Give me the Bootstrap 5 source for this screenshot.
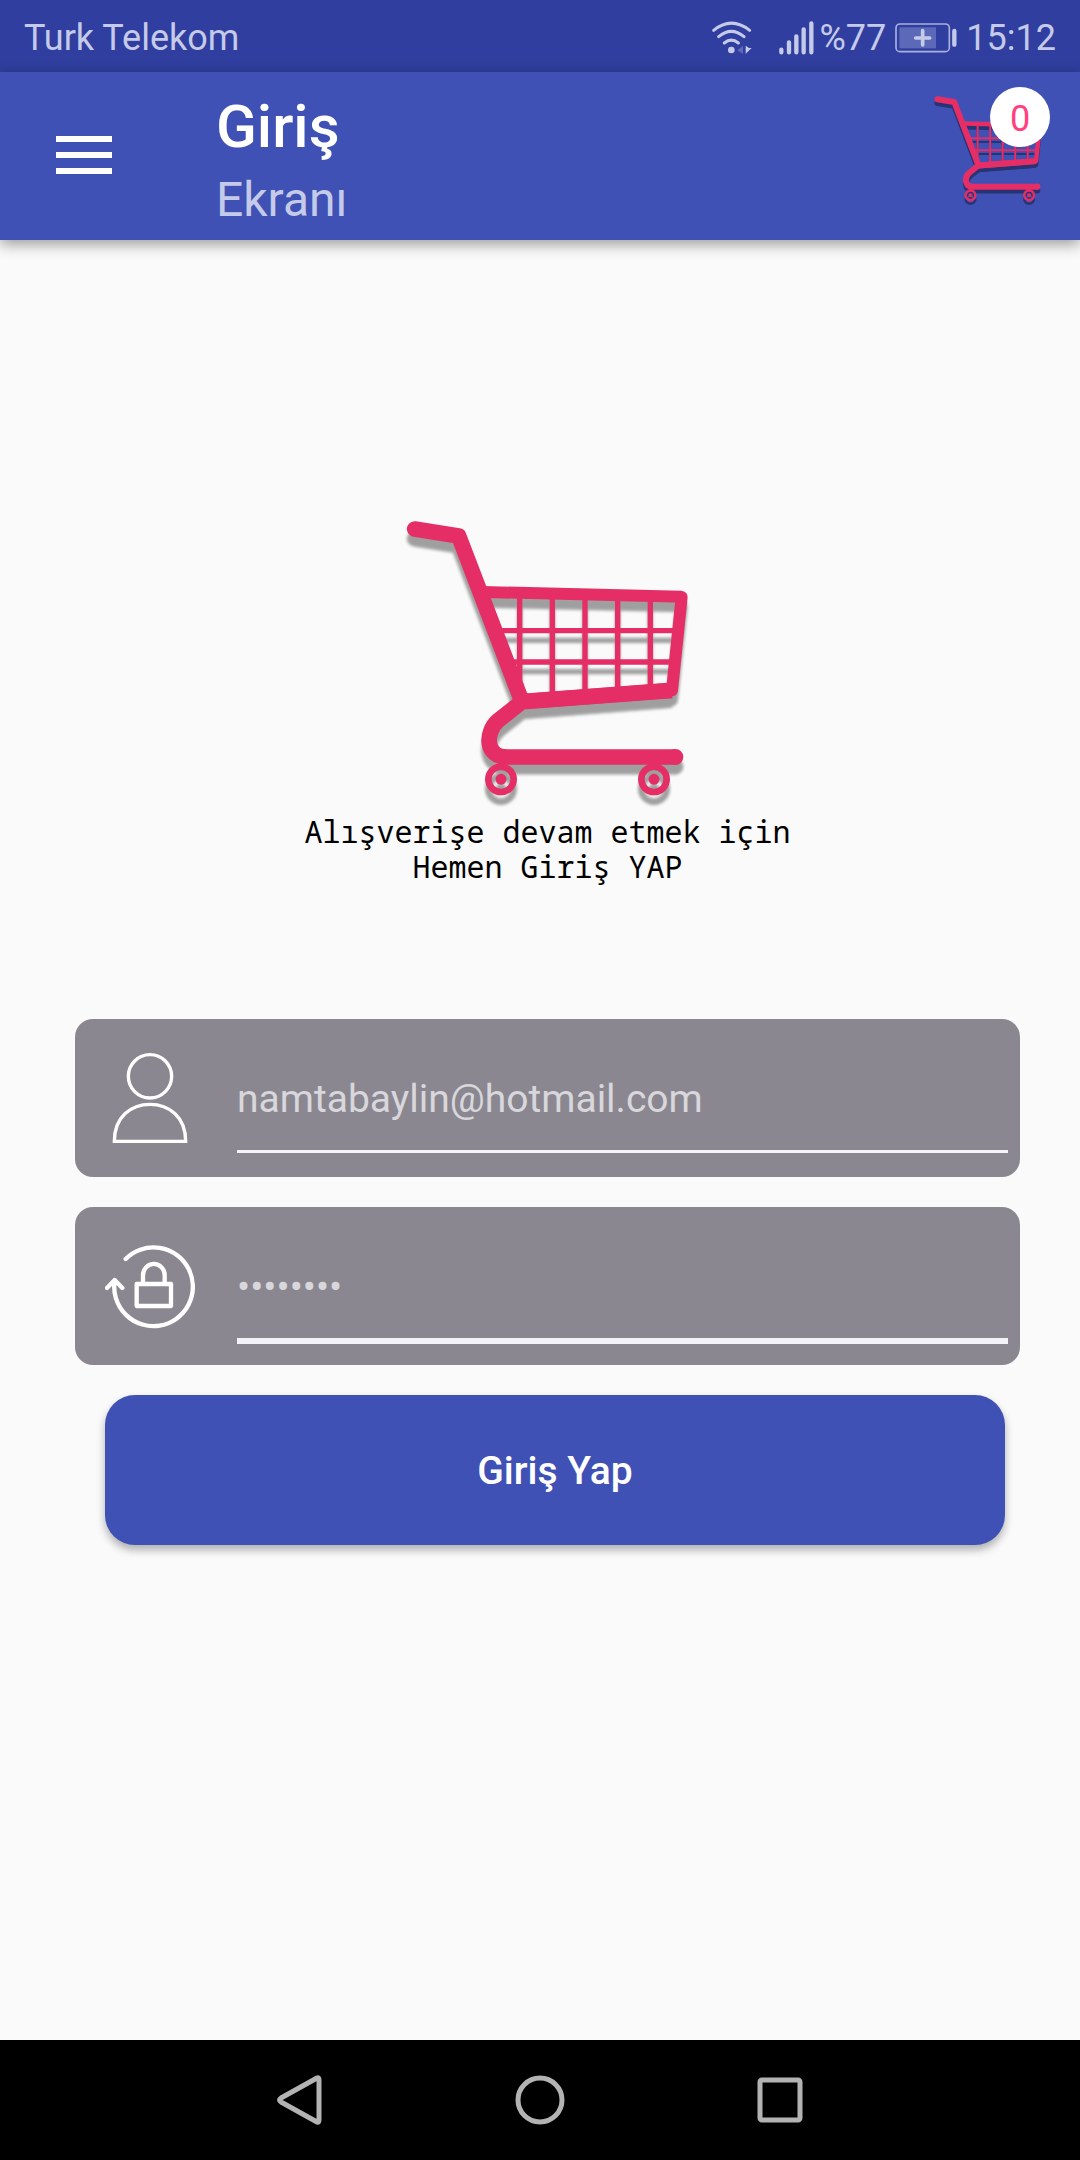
<!DOCTYPE html>
<html lang="tr">
<head>
<meta charset="utf-8">
<meta name="viewport" content="width=device-width, initial-scale=1">
<title>Giriş Ekranı</title>
<link href="https://cdn.jsdelivr.net/npm/bootstrap@5.3.0/dist/css/bootstrap.min.css" rel="stylesheet">
<style>
  body { background: #fafafa; font-family: Roboto, "Noto Sans", sans-serif; }
  svg { display: block; flex: none; }
  .statusbar { background: #303f9f; color: #c5cae9; font-size: 36px; line-height: 42px; height: 72px; padding: 4px 24px 0; }
  .statusbar .signal { margin-left: 27px; margin-right: 6px; }
  .statusbar .battery { margin-left: 9px; margin-right: 9px; }
  .appbar { background: #3f51b5; height: 168px; padding: 0 34px 0 56px; box-shadow: 0 4px 14px rgba(0,0,0,.4); }
  .plain { background: none; border: 0; padding: 0; }
  .menu-btn { margin-top: 64px; }
  .titles { margin-left: 104px; padding-top: 20px; }
  .titles h1 { font-size: 60px; line-height: 70px; font-weight: 500; }
  .titles p { font-size: 48px; line-height: 76px; color: #c5cae9; }
  .cart-btn { margin-top: 20px; }
  .count { top: -5px; right: -4px; width: 60px; height: 60px; padding-top: 3px; color: #ff4081; font-size: 36px; line-height: 42px; }
  .login { padding: 270px 60px 60px 75px; }
  .prompt { font: 30px/35px "Noto Sans Mono", "DejaVu Sans Mono", monospace; color: #000; margin: 4px 0 135px; }
  .fields { gap: 30px; }
  .field-box { background: #8b8791; border-radius: 18px; height: 158px; padding: 0 12px 0 30px; gap: 42px; }
  .field-box input { color: #d8d7dc; font-size: 39px; line-height: 46px; height: 134px; padding: 28px 0 0; background: transparent; border: 0; border-bottom: 3px solid #f4f3f7; border-radius: 0; outline: 0; min-width: 0; }
  .field-box input.active-line { height: 137px; border-bottom-width: 6px; }
  .submit { background: #3f51b5; color: #fff; border: 0; border-radius: 30px; height: 150px; margin: 0 15px 0 30px; padding: 3px 0 0; font-size: 39px; font-weight: 500; box-shadow: 0 5px 8px rgba(0,0,0,.3); }
  .submit:hover { background: #3949ab; color: #fff; }
  .navkeys { background: #000; height: 120px; }
  .navkeys button { width: 240px; }
</style>
<script src="https://cdn.jsdelivr.net/npm/bootstrap@5.3.0/dist/js/bootstrap.bundle.min.js"></script>
</head>
<body class="min-vh-100 d-flex flex-column">

<svg width="0" height="0" class="position-absolute" aria-hidden="true">
  <defs>
    <g id="cart-lines" fill="none">
      <path d="M74 87L206 108L396 605" stroke-width="47" stroke-linecap="round" stroke-linejoin="round"/>
      <path d="M280 276L875 290" stroke-width="36"/>
      <path d="M875 291L846 571" stroke-width="36" stroke-linecap="round"/>
      <path d="M396 605L845 571" stroke-width="46"/>
      <path d="M845 571L396 605L324 662C284 698 286 771 350 771H856" stroke-width="47" stroke-linejoin="round"/>
      <path d="M389 280V560M487 285V590M585 285V580M683 285V575M781 285V565M330 392H860M370 486H850" stroke-width="16"/>
      <circle cx="856" cy="771" r="12" stroke-width="24"/>
      <circle cx="333" cy="838" r="38" stroke-width="20"/>
      <circle cx="792" cy="838" r="38" stroke-width="20"/>
      <circle cx="333" cy="838" r="8" stroke-width="17"/>
      <circle cx="792" cy="838" r="8" stroke-width="17"/>
    </g>
    <filter id="soft" x="-10%" y="-10%" width="120%" height="120%"><feGaussianBlur stdDeviation="4"/></filter>
    <symbol id="cart" viewBox="24 30 900 900">
      <use href="#cart-lines" y="29" stroke="#000" opacity=".36" filter="url(#soft)"/>
      <use href="#cart-lines" stroke="#e52e66"/>
    </symbol>
  </defs>
</svg>

<div class="statusbar d-flex align-items-center">
  <span class="me-auto">Turk Telekom</span>
  <svg width="40" height="34" viewBox="68 57 120 102" aria-label="Wi-Fi" fill="none" stroke="#c5cae9" stroke-width="9" stroke-linecap="round">
    <path d="M73 85Q126 42 181 85M88 104Q126 72 164 104M105 123Q126 106 147 123"/>
    <circle cx="126" cy="144" r="10" fill="#c5cae9" stroke="none"/>
    <path d="M161 131V156L144 145Z" fill="#5c69b8" stroke="none"/>
    <path d="M169 131V155L187 138L179 138Z" fill="#c5cae9" stroke="none"/>
  </svg>
  <svg class="signal" width="35" height="34" viewBox="269 56 105 102" aria-label="Sinyal" stroke="#c5cae9" stroke-width="13" stroke-linecap="round">
    <path d="M276 142V150M299 120V150M321 102V150M343 81V150M366 63V150"/>
  </svg>
  <span>%77</span>
  <svg class="battery" width="62" height="30" viewBox="615 68 186 90" aria-label="Pil">
    <rect x="618" y="71" width="160" height="83" rx="12" fill="none" stroke="#a9b0dc" stroke-width="5"/>
    <rect x="628" y="81" width="110" height="63" fill="#5c69b8"/>
    <path d="M698 91V134M677 113H719" stroke="#c5cae9" stroke-width="11" stroke-linecap="round"/>
    <path d="M793 92V133" stroke="#c5cae9" stroke-width="13" stroke-linecap="round"/>
  </svg>
  <span>15:12</span>
</div>

<header class="appbar d-flex align-items-start text-white">
  <button type="button" class="plain menu-btn" aria-label="Menü">
    <svg width="56" height="38" fill="#fff"><path d="M0 0H56V6H0ZM0 16H56V22H0ZM0 32H56V38H0Z"/></svg>
  </button>
  <div class="titles me-auto">
    <h1 class="mb-0">Giriş</h1>
    <p class="mb-0">Ekranı</p>
  </div>
  <button type="button" class="plain cart-btn position-relative" aria-label="Sepet">
    <svg width="115" height="115"><use href="#cart"/></svg>
    <span class="count position-absolute rounded-circle bg-white d-flex align-items-center justify-content-center">0</span>
  </button>
</header>

<main class="login flex-grow-1">
  <svg class="mx-auto" width="300" height="300" aria-hidden="true"><use href="#cart"/></svg>
  <p class="prompt text-center">Alışverişe devam etmek için<br>Hemen Giriş YAP</p>
  <form class="fields d-flex flex-column">
    <div class="field-box d-flex">
      <label for="email" class="align-self-center" aria-label="E-posta">
        <svg width="90" height="90" viewBox="135 129 270 270" fill="none" stroke="#fff" stroke-width="10">
          <circle cx="270" cy="199" r="65"/>
          <path d="M163 394C163 320 214 283 270 283S377 320 377 394Z"/>
        </svg>
      </label>
      <input id="email" type="email" class="flex-grow-1" value="namtabaylin@hotmail.com">
    </div>
    <div class="field-box d-flex">
      <label for="password" class="align-self-center" aria-label="Parola">
        <svg width="90" height="90" viewBox="135 693 270 270" fill="none" stroke="#fff" stroke-width="13" stroke-linecap="round" stroke-linejoin="round">
          <path d="M197 747A118 118 0 1 1 164 812M141 834L164 810L187 834"/>
          <path d="M249 822V796A32 34 0 0 1 314 796V822M230 822H333V888H230Z"/>
        </svg>
      </label>
      <input id="password" type="password" class="flex-grow-1 active-line" value="12345678">
    </div>
    <button type="submit" class="submit btn">Giriş Yap</button>
  </form>
</main>

<nav class="navkeys d-flex justify-content-center">
  <button type="button" class="plain d-flex align-items-center justify-content-center" aria-label="Geri">
    <svg width="50" height="50" fill="none" stroke="#b3b3b3" stroke-width="5" stroke-linejoin="round"><path d="M42 3Q44 2 44 5V45Q44 48 42 47L6 27Q3 25 6 23Z"/></svg>
  </button>
  <button type="button" class="plain d-flex align-items-center justify-content-center" aria-label="Ana ekran">
    <svg width="50" height="50" fill="none" stroke="#b3b3b3" stroke-width="5"><circle cx="25" cy="25" r="22"/></svg>
  </button>
  <button type="button" class="plain d-flex align-items-center justify-content-center" aria-label="Son uygulamalar">
    <svg width="46" height="46" fill="none" stroke="#b3b3b3" stroke-width="5"><rect x="3" y="3" width="40" height="40" rx="2"/></svg>
  </button>
</nav>
</body>
</html>
